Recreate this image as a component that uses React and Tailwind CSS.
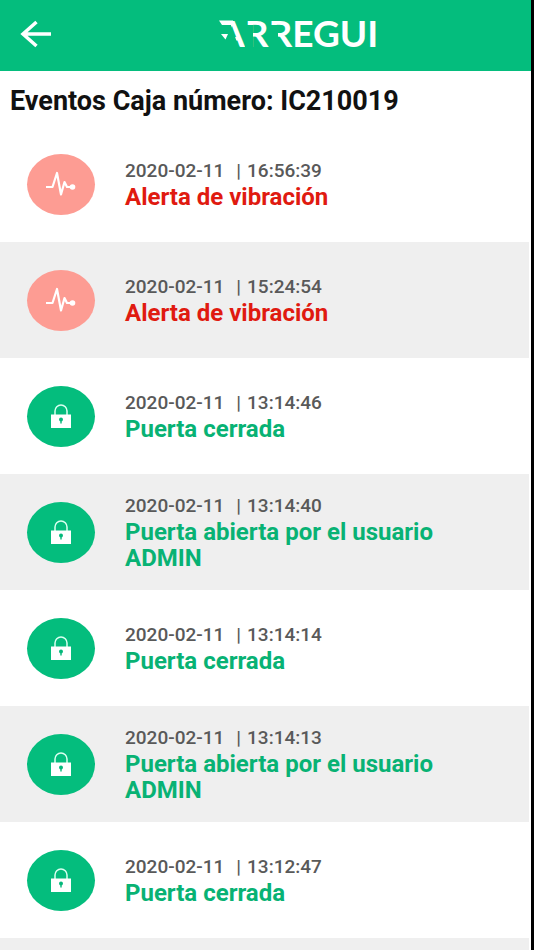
const events = [
  { date: '2020-02-11', time: '16:56:39', text: 'Alerta de vibración', type: 'alert' },
  { date: '2020-02-11', time: '15:24:54', text: 'Alerta de vibración', type: 'alert' },
  { date: '2020-02-11', time: '13:14:46', text: 'Puerta cerrada', type: 'door' },
  { date: '2020-02-11', time: '13:14:40', text: 'Puerta abierta por el usuario ADMIN', type: 'door' },
  { date: '2020-02-11', time: '13:14:14', text: 'Puerta cerrada', type: 'door' },
  { date: '2020-02-11', time: '13:14:13', text: 'Puerta abierta por el usuario ADMIN', type: 'door' },
  { date: '2020-02-11', time: '13:12:47', text: 'Puerta cerrada', type: 'door' },
]

function BackIcon() {
  return (
    <svg width="32" height="28" viewBox="0 0 32 28" fill="none" stroke="white" strokeWidth="3.5">
      <path d="M16.500 2 L3 14 L16.500 26 M3 14 H31" />
    </svg>
  )
}

// Wordmark: plain text with cuts in the header green over the stems
function Logo() {
  return (
    <svg width="160" height="50" viewBox="0 0 160 50" role="img" aria-label="ARREGUI">
      <text x="0" y="36" fill="white" fontSize="37" className="font-['Lato',sans-serif] font-bold">
        ARREGUI
      </text>
      <g fill="#04bd7d">
        <path d="M-1 37 V13 H11.500 L20 37 Z" />
        <rect x="26" y="14" width="8" height="24" />
        <rect x="51" y="14" width="8" height="24" />
      </g>
      <g fill="white">
        <path d="M0 9.500 H14 V14 H3 Z" />
        <path d="M2 23 H9 L6.500 28.500 Z" />
      </g>
    </svg>
  )
}

function PulseIcon() {
  return (
    <svg width="30" height="26" viewBox="0 0 30 26" fill="none" stroke="white" strokeWidth="2.200" strokeLinejoin="round">
      <path d="M0 16 H6.500 L11 2 L15 23.500 L18.500 11 L21 16 H26" />
      <circle cx="26.500" cy="16" r="2.800" fill="white" stroke="none" />
    </svg>
  )
}

function LockIcon() {
  return (
    <svg width="20" height="24" viewBox="0 0 20 24">
      <path d="M4 11 V7 a6 6 0 0 1 12 0 V11" fill="none" stroke="#d9fff0" strokeWidth="1.500" />
      <rect y="10.500" width="20" height="13.500" fill="white" />
      <circle cx="10" cy="15.500" r="2" fill="#04b87a" />
      <path d="M9.300 16 h1.400 v3.500 h-1.400 z" fill="#04b87a" />
    </svg>
  )
}

function EventRow({ event }) {
  const alert = event.type === 'alert'
  return (
    <li className="flex min-h-29 items-center pl-[27px] pr-14 even:bg-[#efefef]">
      <div
        className={`flex h-[61px] w-[68px] shrink-0 items-center justify-center rounded-[50%] ${
          alert ? 'bg-[#fd9c93]' : 'bg-[#04bd7d]'
        }`}
      >
        {alert ? <PulseIcon /> : <LockIcon />}
      </div>
      <div className="ml-[30px]">
        <p className="flex text-[19px] font-medium leading-[26px] text-[#595959]">
          <span>{event.date}</span>
          <span className="ml-3 mr-1.5">|</span>
          <span>{event.time}</span>
        </p>
        <p className={`text-2xl font-bold leading-[26px] ${alert ? 'text-[#e01a10]' : 'text-[#08b274]'}`}>
          {event.text}
        </p>
      </div>
    </li>
  )
}

function App() {
  return (
    <div className="flex h-dvh flex-col overflow-hidden border-r-[3px] border-black bg-white font-['Roboto',sans-serif]">
      <header className="grid h-[71px] shrink-0 grid-cols-[3fr_auto_2fr] items-center bg-[#04bd7d] px-5">
        <button type="button" aria-label="Volver" className="justify-self-start pb-1">
          <BackIcon />
        </button>
        <Logo />
      </header>

      <main className="flex flex-1 flex-col pr-0.5">
        <h1 className="px-[10px] pb-2 pt-[13px] text-[27px] font-bold leading-[34px] text-[#111]">
          Eventos Caja número: IC210019
        </h1>
        <ul>
          {events.map((event) => (
            <EventRow key={event.time} event={event} />
          ))}
        </ul>
        <div className="flex-1 bg-[#efefef]" />
      </main>
    </div>
  )
}

export default App
